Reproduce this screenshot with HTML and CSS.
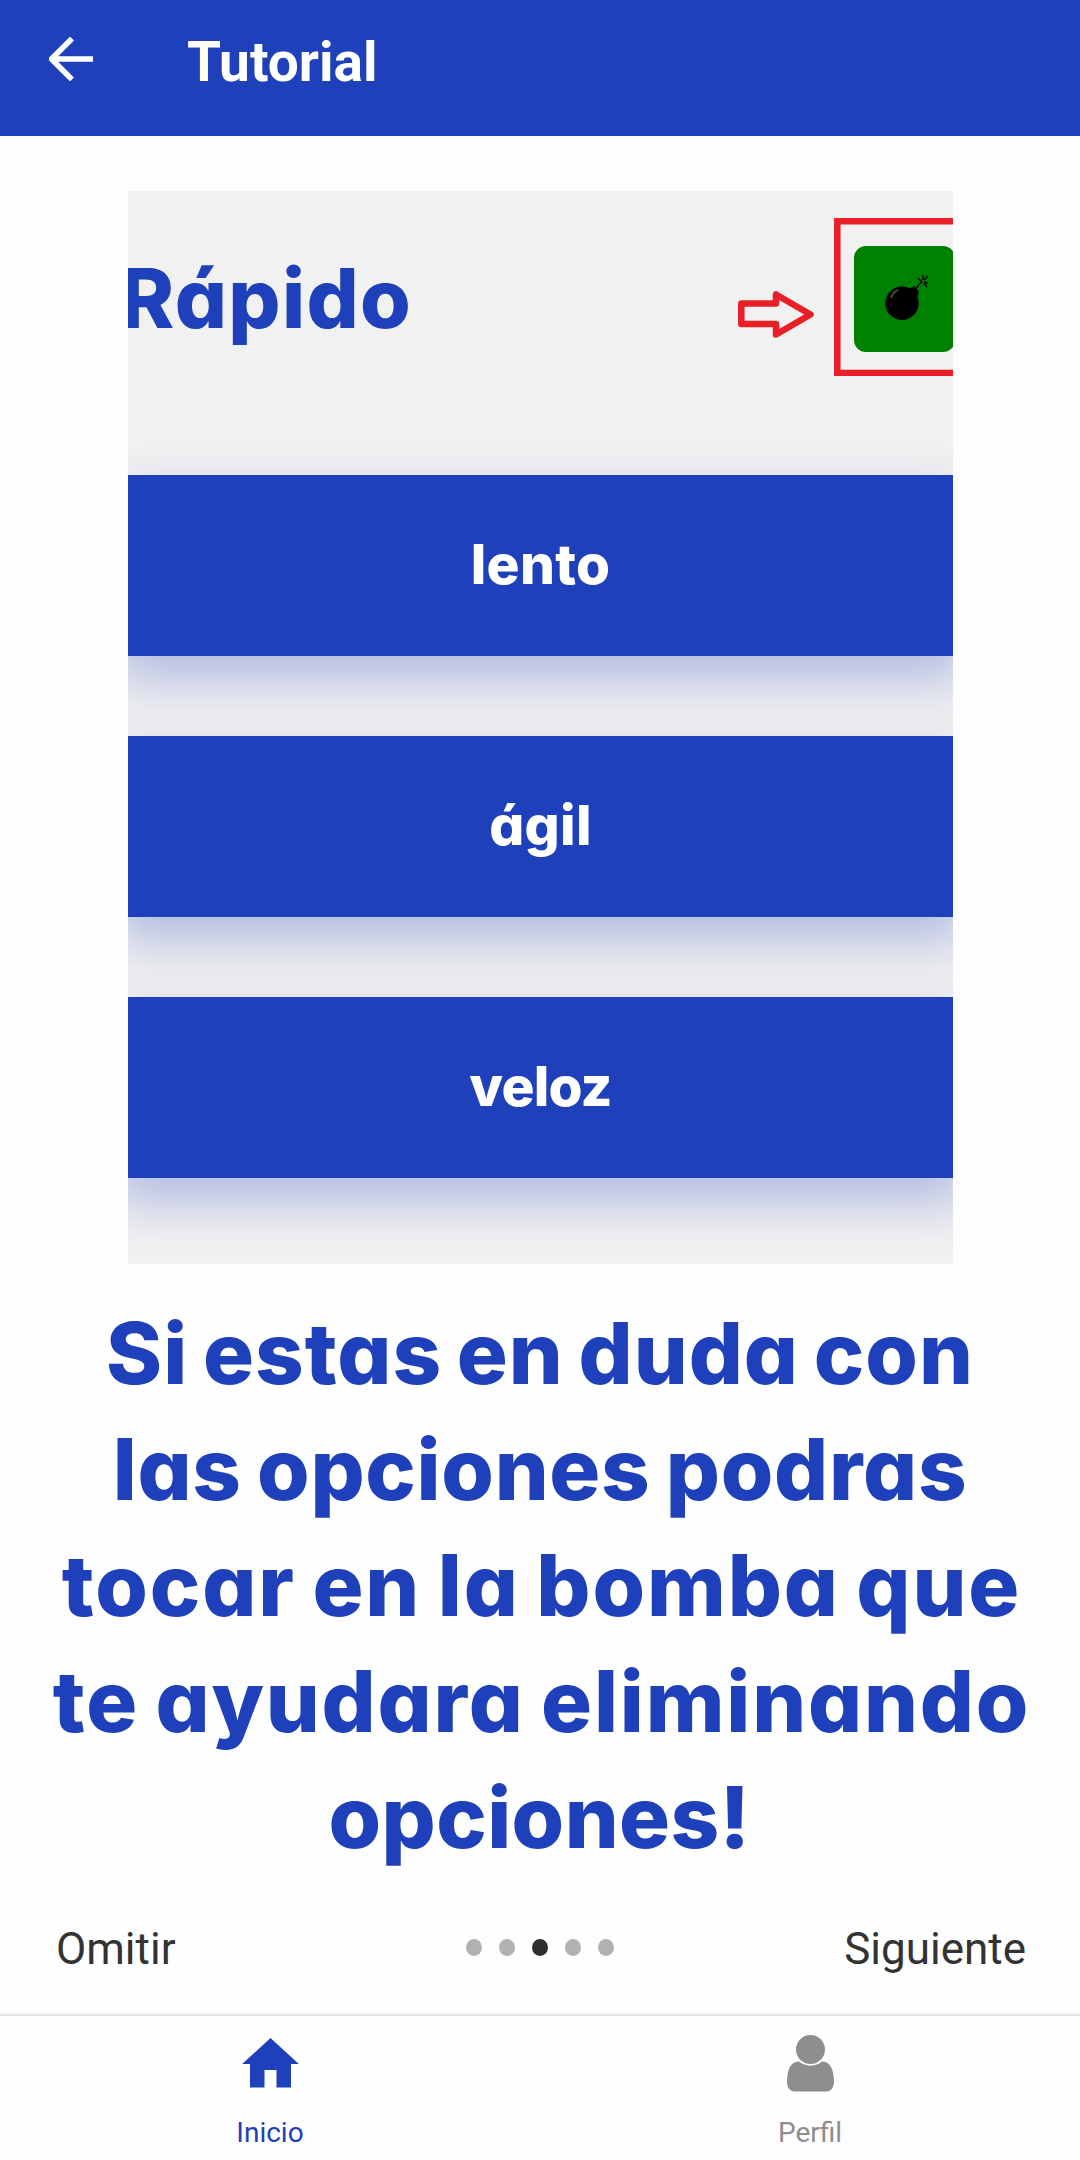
FILE: index.html
```html
<!DOCTYPE html>
<html lang="es">
<head>
<meta charset="utf-8">
<title>Tutorial</title>
<link rel="stylesheet" href="styles.css">
</head>
<body>
<header class="topbar">
  <svg class="back" viewBox="0 0 44 44"><path d="M23 1.500 2.500 22 23 42.500M3 22H44"/></svg>
  <h1 class="title">Tutorial</h1>
</header>
<main class="content">
  <section class="preview">
    <div class="preview-head">
      <span class="word">Rápido</span>
      <svg class="hint" viewBox="0 0 216 158">
        <path class="arrow" d="M4.300 85.500V106H39V116.500L73.500 96.500 39 76.500V85.500Z"/>
        <path class="frame" d="M220 3.200H100.300V155H220"/>
        <rect class="bomb-button" x="117" y="28" width="101" height="106" rx="12"/>
        <g class="bomb">
          <circle cx="165" cy="85.300" r="16.700"/>
          <path d="M172 71l5-3 5 6-2 6z"/>
          <path class="fuse" d="M178 73c2-5 4-7 7-9M185 64l-4-4M186 62v-5M187 62l4-4M187 64l4 1M187 65l3 4"/>
          <path class="shine" d="M154 80q2-6 7-8"/>
        </g>
      </svg>
    </div>
    <div class="option"><span class="label">lento</span></div>
    <div class="option"><span class="label">ágil</span></div>
    <div class="option"><span class="label tight">veloz</span></div>
  </section>
  <p class="caption">
    <span class="line l1">Si estas en duda con</span>
    <span class="line l2">las opciones podras</span>
    <span class="line l3">tocar en la bomba que</span>
    <span class="line l4">te ayudara eliminando</span>
    <span class="line l5">opciones!</span>
  </p>
  <div class="pager">
    <span class="skip">Omitir</span>
    <div class="dots"><i></i><i></i><i class="on"></i><i></i><i></i></div>
    <span class="next">Siguiente</span>
  </div>
</main>
<nav class="tabs">
  <div class="tab active">
    <svg class="tab-icon" viewBox="0 0 60 64"><path d="M30.500 9 58.800 35H51V58.500H36.500V41H24.500V58.500H10V35H2.200Z"/></svg>
    <span>Inicio</span>
  </div>
  <div class="tab">
    <svg class="tab-icon" viewBox="0 0 60 64"><circle cx="30.500" cy="20.500" r="14.500"/><path d="M19 32.500C24.500 38 36.500 38 42 32.500C50.500 32 54 41.500 54 53C54 59 50.500 62.500 46.500 62.500H14.500C10.500 62.500 7 59 7 53C7 41.500 10.500 32 19 32.500Z"/></svg>
    <span>Perfil</span>
  </div>
</nav>
</body>
</html>
```
FILE: styles.css
```css
* { box-sizing: border-box; }

body {
  margin: 0;
  width: 1080px;
  height: 2160px;
  display: flex;
  flex-direction: column;
  background: #fefefe;
  font-family: Roboto, sans-serif;
  overflow: hidden;
}

.topbar {
  height: 136px;
  flex: none;
  display: flex;
  padding-left: 49px;
  background: #1f40bb;
  color: #fff;
}
.back {
  width: 44px;
  height: 44px;
  margin: 37px 94px 0 0;
  fill: none;
  stroke: #fff;
  stroke-width: 5.5;
}
.title {
  margin: 30px 0 0;
  font-size: 55px;
  line-height: 64px;
  font-weight: 700;
}

.content {
  flex: 1;
  display: flex;
  flex-direction: column;
  align-items: center;
  padding-top: 55px;
}

.preview {
  width: 825px;
  height: 1073px;
  flex: none;
  margin-left: 1px;
  display: flex;
  flex-direction: column;
  gap: 80px;
  overflow: hidden;
  background: #f1f1f1;
  font-family: Inter, sans-serif;
  font-weight: 800;
  font-feature-settings: "cv11";
}
.preview-head {
  height: 204px;
  flex: none;
  display: flex;
  justify-content: space-between;
  align-items: flex-start;
}
.word {
  margin: 58px 0 0 -8px;
  color: #1f40bb;
  font-size: 82px;
  line-height: 100px;
  letter-spacing: 1.3px;
}
.hint {
  width: 216px;
  height: 158px;
  margin-top: 27px;
}
.arrow, .frame {
  fill: none;
  stroke: #e81f27;
  stroke-width: 6.5;
  stroke-linejoin: round;
}
.frame { stroke-linejoin: miter; }
.bomb-button { fill: #008000; }
.fuse { fill: none; stroke: #000; stroke-width: 1.5; }
.shine { fill: none; stroke: #3a4a3a; stroke-width: 2; }

.option {
  height: 181px;
  flex: none;
  margin: 0 -14px;
  background: #1f40bb;
  color: #fff;
  font-size: 55px;
  line-height: 179px;
  text-align: center;
  box-shadow: 0 24px 48px rgba(31, 64, 187, .3);
}
.label { letter-spacing: 0.3px; }
.tight { letter-spacing: -0.8px; }

.caption {
  margin: 32px 0 0;
  font: 800 85px/116px Inter, sans-serif;
  font-feature-settings: "cv11";
  color: #1f40bb;
  text-align: center;
  white-space: nowrap;
}
.line { display: block; }
.l1 { letter-spacing: 1px; word-spacing: -5px; }
.l2 { letter-spacing: 0.7px; word-spacing: -4px; }
.l3 { letter-spacing: 1.9px; word-spacing: -4px; padding-left: 3px; }
.l4 { letter-spacing: 1.8px; word-spacing: -4px; padding-left: 3px; }
.l5 { letter-spacing: 0.4px; padding-right: 1px; }

.pager {
  width: 100%;
  height: 60px;
  margin-top: 41px;
  display: grid;
  grid-template-columns: 1fr auto 1fr;
  align-items: center;
  padding: 0 54px 0 56px;
  font-size: 44px;
  color: #333;
}
.skip, .next { padding-top: 3px; }
.next { text-align: right; }
.dots { display: flex; gap: 17px; margin: 0 1px 0 -1px; }
.dots i {
  width: 16px;
  height: 17px;
  border-radius: 50%;
  background: #b1b1b1;
}
.dots .on { background: #2f2f2f; }

.tabs {
  height: 146px;
  flex: none;
  display: flex;
  border-top: 2px solid #e3e3e3;
  box-shadow: 0 -1px 4px rgba(0, 0, 0, .04);
  color: #8e8e8e;
  font-size: 28px;
}
.tab {
  flex: 1;
  display: flex;
  flex-direction: column;
  align-items: center;
  gap: 23px;
  padding-top: 13px;
}
.tab-icon {
  width: 60px;
  height: 64px;
  flex: none;
  fill: currentColor;
}
.active { color: #1f40bb; }
```
